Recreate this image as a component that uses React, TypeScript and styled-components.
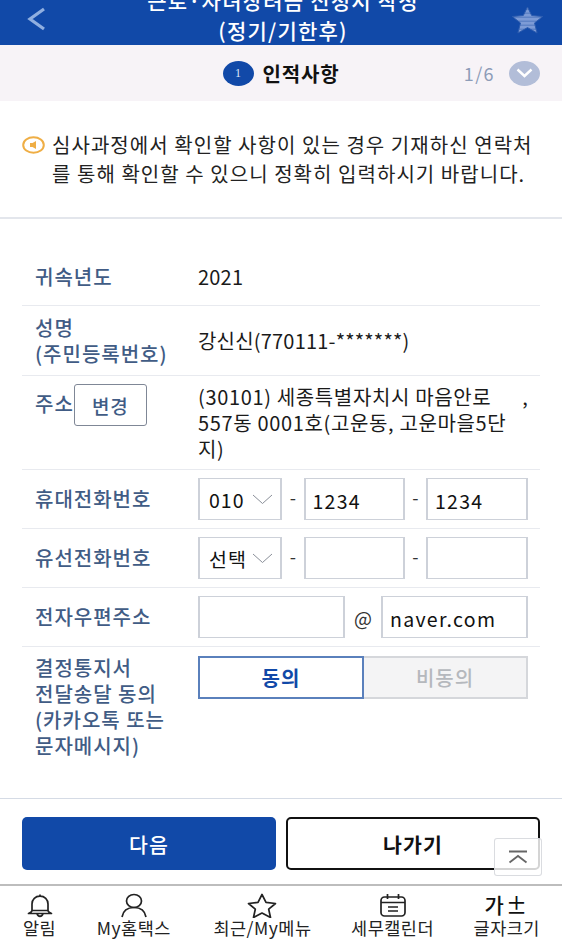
import React from 'react';
import styled, { createGlobalStyle } from 'styled-components';

const FONT = `"Noto Sans CJK KR", "Noto Sans", sans-serif`;

const Global = createGlobalStyle`
  html, body { margin: 0; padding: 0; background: #fff; }
  * { box-sizing: border-box; }
  body { font-family: ${FONT}; }
`;

const Page = styled.div`
  position: relative;
  width: 562px;
  height: 944px;
  overflow: hidden;
  display: flex;
  flex-direction: column;
  background: #fff;
  color: #111;
`;

const Header = styled.header`
  flex: 0 0 45px;
  height: 45px;
  background: #1149a8;
  display: grid;
  grid-template-columns: 60px 1fr 60px;
  grid-template-rows: 45px;
  align-items: center;
  padding: 0 18px 0 22px;
  overflow: hidden;
`;

const BackIcon = styled.svg`
  width: 24px;
  height: 24px;
  margin-top: -8px;
`;

const Title = styled.h1`
  margin: 0;
  align-self: end;
  text-align: center;
  color: #fff;
  font-size: 21px;
  font-weight: 500;
  letter-spacing: 1.2px;
  line-height: 30px;
  white-space: nowrap;
`;

const StarWrap = styled.svg`
  justify-self: end;
  width: 33px;
  height: 28px;
  margin-top: -6px;
`;

const StepBar = styled.div`
  flex: 0 0 56px;
  background: #f7f3f7;
  display: grid;
  grid-template-columns: 1fr auto 1fr;
  align-items: center;
  padding: 0 22px;
`;

const StepCenter = styled.div`
  grid-column: 2;
  display: flex;
  align-items: center;
  gap: 9px;
`;

const StepBadge = styled.span`
  width: 31px;
  height: 25px;
  border-radius: 50%;
  background: #1149a8;
  color: #dfe8f8;
  font-size: 12px;
  display: flex;
  align-items: center;
  justify-content: center;
  font-family: "Liberation Serif", serif;
`;

const StepTitle = styled.span`
  font-size: 20px;
  font-weight: 700;
  letter-spacing: 0.8px;
  color: #111;
`;

const StepRight = styled.div`
  grid-column: 3;
  justify-self: end;
  display: flex;
  align-items: center;
  gap: 14px;
`;

const StepCount = styled.span`
  font-size: 18px;
  letter-spacing: 1.4px;
  color: #8d9cb8;
`;

const StepToggle = styled.span`
  width: 31px;
  height: 25px;
  border-radius: 50%;
  background: #b2bdd8;
  display: flex;
  align-items: center;
  justify-content: center;
`;

const Notice = styled.section`
  flex: 0 0 118px;
  border-bottom: 2px solid #e3e6ec;
  display: flex;
  align-items: flex-start;
  gap: 7px;
  padding: 29px 20px 0 22px;
`;

const NoticeIcon = styled.svg`
  flex: 0 0 23px;
  width: 23px;
  height: 18px;
  margin-top: 6px;
`;

const NoticeText = styled.p`
  margin: 0;
  font-size: 20px;
  line-height: 29px;
  letter-spacing: 1.05px;
  color: #222;
`;

const Form = styled.main`
  flex: 1;
  padding: 30px 22px 0;
`;

const Row = styled.div<{ $h: number; $top?: boolean }>`
  height: ${(p) => p.$h}px;
  display: grid;
  grid-template-columns: 176px 1fr;
  align-items: ${(p) => (p.$top ? 'start' : 'center')};
  border-bottom: 1.5px solid #e8eaef;
  &:last-child { border-bottom: none; }
`;

const Label = styled.div<{ $top?: number }>`
  padding-left: 13px;
  padding-top: ${(p) => p.$top ?? 0}px;
  font-size: 20px;
  line-height: 26px;
  font-weight: 500;
  letter-spacing: 1px;
  color: #415c85;
  white-space: nowrap;
`;

const AddressLabel = styled(Label)`
  display: flex;
  align-items: flex-start;
  line-height: 40px;
  padding-top: 8px;
`;

const ChangeButton = styled.button`
  width: 73px;
  height: 42px;
  background: #fff;
  border: 1px solid #7f8796;
  border-radius: 3px;
  font-family: ${FONT};
  font-size: 19px;
  font-weight: 500;
  letter-spacing: 0.8px;
  color: #415c85;
  padding: 0;
`;

const Value = styled.div`
  font-size: 20px;
  line-height: 26px;
  letter-spacing: 0.2px;
  color: #1a1a1a;
`;

const AddressValue = styled(Value)`
  padding-top: 8px;
  white-space: pre;
  letter-spacing: 0.65px;
`;

const Fields = styled.div`
  display: flex;
  align-items: center;
  padding-right: 12px;
`;

const Select = styled.div`
  flex: 0 0 84px;
  height: 42px;
  border: 2px solid #cdd1d9;
  border-width: 1.5px 2px;
  display: flex;
  align-items: center;
  justify-content: space-between;
  padding: 0 7px 0 9px;
  font-size: 19.5px;
  letter-spacing: 1px;
  color: #111;
  background: #fff;
`;

const Chevron = styled.svg`
  width: 21px;
  height: 11px;
  flex: none;
`;

const Dash = styled.span`
  flex: 1;
  text-align: center;
  font-size: 18px;
  color: #333;
  margin-top: -4px;
`;

const Field = styled.input<{ $w: number }>`
  flex: 0 0 ${(p) => p.$w}px;
  width: ${(p) => p.$w}px;
  height: 42px;
  border: 2px solid #cdd1d9;
  border-width: 1.5px 2px;
  border-radius: 0;
  outline: none;
  padding: 2px 7px 0;
  font-family: ${FONT};
  font-size: 19.5px;
  letter-spacing: 1.3px;
  color: #111;
  background: #fff;
`;

const At = styled.span`
  flex: 1;
  text-align: center;
  font-size: 19px;
  color: #333;
`;

const Toggle = styled.div`
  display: flex;
  margin-top: 9px;
  padding-right: 12px;
`;

const ToggleButton = styled.button<{ $on?: boolean }>`
  flex: 1;
  height: 43px;
  padding: 0;
  font-family: ${FONT};
  font-size: 20px;
  font-weight: ${(p) => (p.$on ? 700 : 500)};
  letter-spacing: 1px;
  color: ${(p) => (p.$on ? '#1149a8' : '#b5b8bd')};
  background: ${(p) => (p.$on ? '#fff' : '#f4f4f5')};
  border: ${(p) => (p.$on ? '2.5px solid #5a80bc' : '2px solid #d5d7db')};
  border-left-width: ${(p) => (p.$on ? '2.5px' : '0')};
`;

const Actions = styled.div`
  flex: 0 0 86px;
  border-top: 1.5px solid #d5dbe5;
  display: grid;
  grid-template-columns: 1fr 1fr;
  gap: 10px;
  padding: 18px 22px 14px;
`;

const ActionButton = styled.button<{ $primary?: boolean }>`
  height: 53px;
  padding: 0;
  border-radius: 5px;
  font-family: ${FONT};
  font-size: 20.5px;
  font-weight: ${(p) => (p.$primary ? 500 : 700)};
  letter-spacing: 1.2px;
  color: ${(p) => (p.$primary ? '#fff' : '#111')};
  background: ${(p) => (p.$primary ? '#1149a8' : '#fff')};
  border: ${(p) => (p.$primary ? 'none' : '2px solid #111')};
`;

const ScrollTop = styled.div`
  position: absolute;
  left: 494px;
  top: 838px;
  width: 48px;
  height: 38px;
  border: 1.5px solid rgba(205, 208, 214, 0.75);
  border-radius: 3px;
  background: rgba(255, 255, 255, 0.82);
  display: flex;
  align-items: center;
  justify-content: center;
`;

const Nav = styled.nav`
  flex: 0 0 60px;
  border-top: 2px solid #bdbdbd;
  display: flex;
  justify-content: space-between;
  padding: 6px 22px 0 23px;
`;

const NavItem = styled.div<{ $shift?: number }>`
  display: flex;
  flex-direction: column;
  align-items: center;
  margin-left: ${(p) => p.$shift ?? 0}px;
`;

const NavIcon = styled.svg`
  width: 30px;
  height: 26px;
  display: block;
`;

const NavGlyph = styled.span`
  height: 26px;
  font-size: 21px;
  font-weight: 500;
  line-height: 24px;
  letter-spacing: 2px;
  color: #111;
`;

const NavLabel = styled.span`
  font-size: 17.5px;
  line-height: 19px;
  letter-spacing: 0.5px;
  white-space: nowrap;
  color: #222;
`;

const nav = [
  {
    label: '알림',
    shift: 0,
    icon: (
      <>
        <path d="M15 2.500v2M7 18.500V12c0-4.800 3.400-7.800 8-7.800s8 3 8 7.800v6.500M3.500 21.500c2.200-.8 3.500-1.800 3.500-3h16c0 1.200 1.300 2.200 3.500 3z" />
        <path d="M12 21.500c.5 2 1.500 2.800 3 2.800s2.500-.8 3-2.800" />
      </>
    ),
  },
  {
    label: 'My홈택스',
    shift: 1,
    icon: (
      <>
        <ellipse cx="15" cy="9" rx="7.500" ry="6.500" />
        <path d="M3 25c1-6 5.500-9.500 12-9.500S26 19 27 25" />
      </>
    ),
  },
  {
    label: '최근/My메뉴',
    shift: 3,
    icon: <path d="M15 2.500l4 7.800 9.500 1.200-6.800 5.700 1.800 8.300L15 21l-8.500 4.500 1.800-8.300-6.800-5.700 9.500-1.200z" />,
  },
  {
    label: '세무캘린더',
    shift: 0,
    icon: (
      <>
        <rect x="3" y="5" width="24" height="19" rx="3.500" />
        <path d="M3 10.500h24M9.500 2v5M20.500 2v5M10 15h10M10 19h10" />
      </>
    ),
  },
];

export default function App() {
  return (
    <Page>
      <Global />
      <Header>
        <BackIcon viewBox="0 0 24 24" fill="none" stroke="#90afe0" strokeWidth="3.200">
          <path d="M22 2L8 12l14 10" />
        </BackIcon>
        <Title>
          근로·자녀장려금 신청서 작성
          <br />
          (정기/기한후)
        </Title>
        <StarWrap viewBox="0 0 33 28">
          <defs>
            <pattern id="stripes" width="4" height="4" patternUnits="userSpaceOnUse">
              <rect width="4" height="4" fill="#7d9bd6" />
              <rect y="2.500" width="4" height="1.500" fill="#5f83c6" />
            </pattern>
          </defs>
          <path
            d="M16.500 1l4.200 8.500 11 1-8.200 6.500 2.600 10-9.600-5.400L6.900 27l2.600-10L1.300 10.500l11-1z"
            fill="url(#stripes)"
            stroke="#2c5cb0"
            strokeWidth="1"
          />
        </StarWrap>
      </Header>

      <StepBar>
        <StepCenter>
          <StepBadge>1</StepBadge>
          <StepTitle>인적사항</StepTitle>
        </StepCenter>
        <StepRight>
          <StepCount>1/6</StepCount>
          <StepToggle>
            <svg width="17" height="10" viewBox="0 0 17 10" fill="none" stroke="#fff" strokeWidth="2.400">
              <path d="M1.500 1.500l7 6.500 7-6.500" />
            </svg>
          </StepToggle>
        </StepRight>
      </StepBar>

      <Notice>
        <NoticeIcon viewBox="0 0 23 18" fill="none">
          <ellipse cx="11.500" cy="9" rx="10.300" ry="7.800" stroke="#efae45" strokeWidth="2" />
          <path d="M8 7h2.500L14 5v8l-3.500-2H8z" fill="#efae45" />
        </NoticeIcon>
        <NoticeText>
          심사과정에서 확인할 사항이 있는 경우 기재하신 연락처
          <br />를 통해 확인할 수 있으니 정확히 입력하시기 바랍니다.
        </NoticeText>
      </Notice>

      <Form>
        <Row $h={57}>
          <Label>귀속년도</Label>
          <Value>2021</Value>
        </Row>
        <Row $h={70}>
          <Label>
            성명
            <br />
            (주민등록번호)
          </Label>
          <Value>강신신(770111-*******)</Value>
        </Row>
        <Row $h={94} $top>
          <AddressLabel>
            주소
            <ChangeButton>변경</ChangeButton>
          </AddressLabel>
          <AddressValue>
            {'(30101) 세종특별자치시 마음안로      ,\n557동 0001호(고운동, 고운마을5단\n지)'}
          </AddressValue>
        </Row>
        <Row $h={59}>
          <Label>휴대전화번호</Label>
          <Fields>
            <Select>
              010
              <Chevron viewBox="0 0 21 11" fill="none" stroke="#8a8f99" strokeWidth="1">
                <path d="M1 1l9.500 8.500L20 1" />
              </Chevron>
            </Select>
            <Dash>-</Dash>
            <Field $w={101} readOnly value="1234" />
            <Dash>-</Dash>
            <Field $w={102} readOnly value="1234" />
          </Fields>
        </Row>
        <Row $h={59}>
          <Label>유선전화번호</Label>
          <Fields>
            <Select>
              선택
              <Chevron viewBox="0 0 21 11" fill="none" stroke="#8a8f99" strokeWidth="1">
                <path d="M1 1l9.500 8.500L20 1" />
              </Chevron>
            </Select>
            <Dash>-</Dash>
            <Field $w={101} readOnly value="" />
            <Dash>-</Dash>
            <Field $w={102} readOnly value="" />
          </Fields>
        </Row>
        <Row $h={59}>
          <Label>전자우편주소</Label>
          <Fields>
            <Field $w={147} readOnly value="" />
            <At>@</At>
            <Field $w={147} readOnly value="naver.com" />
          </Fields>
        </Row>
        <Row $h={123} $top>
          <Label $top={8}>
            결정통지서
            <br />
            전달송달 동의
            <br />
            (카카오톡 또는
            <br />
            문자메시지)
          </Label>
          <Toggle>
            <ToggleButton $on>동의</ToggleButton>
            <ToggleButton>비동의</ToggleButton>
          </Toggle>
        </Row>
      </Form>

      <Actions>
        <ActionButton $primary>다음</ActionButton>
        <ActionButton>나가기</ActionButton>
      </Actions>

      <Nav>
        {nav.map((n) => (
          <NavItem key={n.label} $shift={n.shift}>
            <NavIcon viewBox="0 0 30 26" fill="none" stroke="#222" strokeWidth="1.700" strokeLinejoin="round">
              {n.icon}
            </NavIcon>
            <NavLabel>{n.label}</NavLabel>
          </NavItem>
        ))}
        <NavItem>
          <NavGlyph>가±</NavGlyph>
          <NavLabel>글자크기</NavLabel>
        </NavItem>
      </Nav>

      <ScrollTop>
        <svg width="20" height="14" viewBox="0 0 20 14" fill="none" stroke="#666" strokeWidth="1.800">
          <path d="M1 1.500h18M1.500 12.500L10 6l8.500 6.500" />
        </svg>
      </ScrollTop>
    </Page>
  );
}
